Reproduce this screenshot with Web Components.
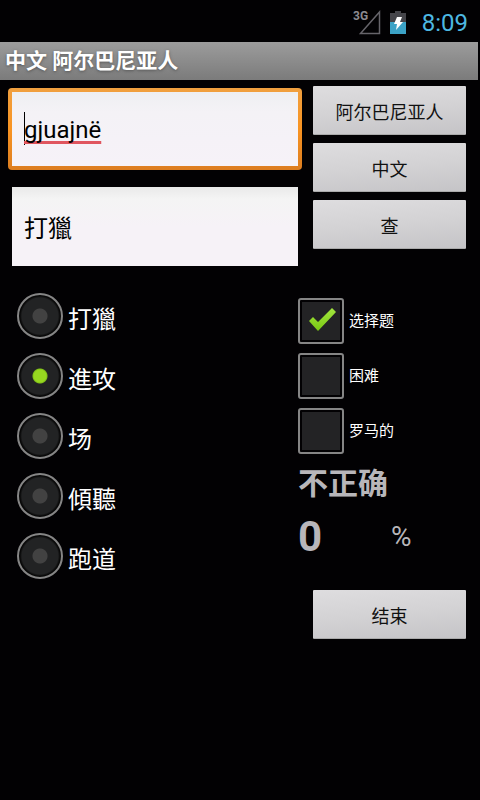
<!DOCTYPE html>
<html lang="zh">
<head>
  <meta charset="utf-8">
  <meta name="viewport" content="width=device-width, initial-scale=1">
  <title>中文 阿尔巴尼亚人</title>
  <style>
    body {
      margin: 0;
      min-height: 100vh;
      background: #020103;
      color: #fff;
      font-family: Roboto, "Noto Sans CJK SC", sans-serif;
    }
  </style>
</head>
<body>
  <quiz-app></quiz-app>

  <script>
    // Base: clona la plantilla de cada elemento en su shadow root
    class BaseElement extends HTMLElement {
      constructor() {
        super();
        this.attachShadow({ mode: 'open' });
      }

      connectedCallback() {
        const template = document.createElement('template');
        template.innerHTML = this.getTemplate() + this.getStyles();
        this.shadowRoot.replaceChildren(template.content.cloneNode(true));
      }
    }

    // Barra de estado: señal, batería y hora
    class StatusBar extends BaseElement {
      getTemplate() {
        return `
          <svg class="signal" viewBox="0 0 28 26" aria-hidden="true">
            <path d="M26.500 2V23.500H7.500Z" fill="none" stroke="#66646a" stroke-width="1.500"/>
            <text x="0" y="10" font-size="12" font-weight="700" fill="#8c8a90">3G</text>
          </svg>
          <svg class="battery" viewBox="0 0 16 24" aria-hidden="true">
            <path d="M5 0h6v2h5v9H0V2h5z" fill="#45454a"/>
            <path d="M0 11h16v12H0z" fill="#3ba2c6"/>
            <path d="M7 6h5l-2 5h3L6 19l1-6H4z" fill="#fff"/>
          </svg>
          <time>${this.getAttribute('hora')}</time>
        `;
      }

      getStyles() {
        return `
          <style>
            :host {
              display: flex;
              justify-content: flex-end;
              align-items: center;
              height: 42px;
              padding: 4px 12px 0;
              box-sizing: border-box;
            }
            .signal { width: 28px; height: 26px; }
            .battery { width: 16px; height: 24px; margin: 0 16px 0 9px; }
            time { color: #4db8e2; font-size: 24px; line-height: 28px; }
          </style>
        `;
      }
    }

    class TitleBar extends BaseElement {
      getTemplate() {
        return `<h1><slot></slot></h1>`;
      }

      getStyles() {
        return `
          <style>
            :host {
              display: block;
              margin-right: 2px;
              padding: 0 5px;
              background: linear-gradient(#9c9c9c, #7b7b7b);
            }
            h1 {
              margin: 0;
              font-size: 21px;
              line-height: 38px;
              font-weight: 700;
              text-shadow: 0 1px 3px #555;
            }
          </style>
        `;
      }
    }

    // Caja de texto; "activo" pinta el marco naranja, el cursor y el subrayado
    class TextField extends BaseElement {
      getTemplate() {
        return `<input type="text" spellcheck="false" aria-label="${this.getAttribute('etiqueta')}" value="${this.getAttribute('valor')}">`;
      }

      getStyles() {
        return `
          <style>
            :host { display: block; margin: 0 4px; }
            :host([activo]) {
              margin: 0;
              padding: 4px;
              border-radius: 4px;
              background: linear-gradient(#f0a040, #f99422 50%, #dc7d20);
            }
            input {
              display: block;
              width: 100%;
              height: 79px;
              box-sizing: border-box;
              padding: 0 12px;
              border: 0;
              outline: 0;
              border-radius: 0;
              background: linear-gradient(#e9e9e9, #f4f4f4 12px, #f6f2f7 40px);
              color: #000;
              font: inherit;
              font-size: 24px;
            }
            :host([activo]) input {
              height: 74px;
              padding-top: 2px;
              background:
                linear-gradient(#000, #000) 12px 20px / 1px 33px no-repeat,
                linear-gradient(#eeeff2, #f4f2f6 20px, #f6f2f8);
              text-decoration: underline 3px #e0565f;
              text-decoration-skip-ink: none;
              text-underline-offset: 3px;
            }
          </style>
        `;
      }
    }

    class GlossButton extends BaseElement {
      getTemplate() {
        return `<button type="button"><slot></slot></button>`;
      }

      getStyles() {
        return `
          <style>
            :host { display: block; }
            button {
              display: block;
              width: 100%;
              height: 49px;
              padding: 2px 0 0;
              border: 0;
              border-bottom: 1px solid #aaa;
              border-radius: 1px;
              background: linear-gradient(175deg, #dedddf, #d3d2d4 50%, #c5c4c7);
              color: #111;
              font: inherit;
              font-size: 18px;
            }
          </style>
        `;
      }
    }

    // Lista de radios en un mismo shadow root para que compartan grupo
    class RadioList extends BaseElement {
      getTemplate() {
        const marcada = this.getAttribute('marcada');
        return this.getAttribute('opciones').split(',').map((texto) => `
          <label>
            <input type="radio" name="respuesta" ${texto === marcada ? 'checked' : ''}>
            <span>${texto}</span>
          </label>
        `).join('');
      }

      getStyles() {
        return `
          <style>
            :host { display: grid; gap: 14px; }
            label {
              display: flex;
              align-items: center;
              gap: 5px;
              font-size: 24px;
              line-height: 36px;
            }
            span { padding-top: 8px; }
            input {
              appearance: none;
              flex: none;
              width: 46px;
              height: 46px;
              margin: 0;
              border: 2px solid #858585;
              border-radius: 50%;
              background: radial-gradient(circle, #424242 7px, #222324 8px, #222324 18px, #080808 20px);
            }
            input:checked {
              background: radial-gradient(circle, #97d820 6px, #80c018 7px, #222324 8px, #222324 18px, #080808 20px);
            }
          </style>
        `;
      }
    }

    class CheckOption extends BaseElement {
      getTemplate() {
        return `
          <label>
            <span class="box">
              <input type="checkbox" ${this.hasAttribute('marcado') ? 'checked' : ''}>
              <svg viewBox="0 0 46 46" aria-hidden="true">
                <defs>
                  <linearGradient id="verde" x2="0" y2="1">
                    <stop stop-color="#a3e640"/>
                    <stop offset="1" stop-color="#79c812"/>
                  </linearGradient>
                </defs>
                <path d="M11 23l4-4 5 5 14-14 4 4L20 33z" fill="url(#verde)"/>
              </svg>
            </span>
            <slot></slot>
          </label>
        `;
      }

      getStyles() {
        return `
          <style>
            :host { display: block; }
            label {
              display: flex;
              align-items: center;
              gap: 5px;
              font-size: 15px;
              line-height: 22px;
            }
            .box { display: grid; flex: none; }
            input, svg {
              grid-area: 1 / 1;
              width: 46px;
              height: 46px;
            }
            input {
              appearance: none;
              margin: 0;
              padding: 2px;
              border: 2px solid #858585;
              border-radius: 3px;
              background: #232325 content-box;
            }
            svg { visibility: hidden; pointer-events: none; }
            input:checked + svg { visibility: visible; }
          </style>
        `;
      }
    }

    // Resultado y porcentaje
    class QuizScore extends BaseElement {
      getTemplate() {
        return `
          <strong class="result"><slot></slot></strong>
          <div class="score">
            <strong>${this.getAttribute('puntos')}</strong>
            <span>%</span>
          </div>
        `;
      }

      getStyles() {
        return `
          <style>
            :host { display: block; color: #b8b6ba; }
            .result { display: block; font-size: 30px; line-height: 42px; }
            .score {
              display: grid;
              grid-template-columns: 93px 1fr;
              align-items: center;
              line-height: 64px;
            }
            .score strong { font-size: 42px; }
            .score span { font-size: 28px; }
          </style>
        `;
      }
    }

    class QuizApp extends BaseElement {
      getTemplate() {
        return `
          <status-bar hora="8:09"></status-bar>
          <title-bar>中文 阿尔巴尼亚人</title-bar>
          <main>
            <section class="words">
              <div class="fields">
                <text-field activo etiqueta="阿尔巴尼亚人" valor="gjuajnë"></text-field>
                <text-field etiqueta="中文" valor="打獵"></text-field>
              </div>
              <div class="buttons">
                <gloss-button>阿尔巴尼亚人</gloss-button>
                <gloss-button>中文</gloss-button>
                <gloss-button>查</gloss-button>
              </div>
            </section>
            <section class="quiz">
              <radio-list opciones="打獵,進攻,场,傾聽,跑道" marcada="進攻"></radio-list>
              <div class="options">
                <check-option marcado>选择题</check-option>
                <check-option>困难</check-option>
                <check-option>罗马的</check-option>
                <quiz-score puntos="0">不正确</quiz-score>
                <gloss-button class="end">结束</gloss-button>
              </div>
            </section>
          </main>
        `;
      }

      getStyles() {
        return `
          <style>
            :host { display: block; }
            main { padding: 6px 14px 0 8px; }
            .words {
              display: grid;
              grid-template-columns: 1fr 153px;
              gap: 11px;
            }
            .fields { display: grid; gap: 17px; padding-top: 2px; }
            .buttons { display: grid; gap: 8px; align-content: start; }
            .quiz {
              display: grid;
              grid-template-columns: 1fr 168px;
              padding: 27px 0 0 9px;
            }
            radio-list { align-content: start; }
            .options { display: grid; gap: 9px; padding-top: 5px; }
            .end { margin: 12px 0 0 15px; }
          </style>
        `;
      }
    }

    customElements.define('status-bar', StatusBar);
    customElements.define('title-bar', TitleBar);
    customElements.define('text-field', TextField);
    customElements.define('gloss-button', GlossButton);
    customElements.define('radio-list', RadioList);
    customElements.define('check-option', CheckOption);
    customElements.define('quiz-score', QuizScore);
    customElements.define('quiz-app', QuizApp);
  </script>
</body>
</html>
